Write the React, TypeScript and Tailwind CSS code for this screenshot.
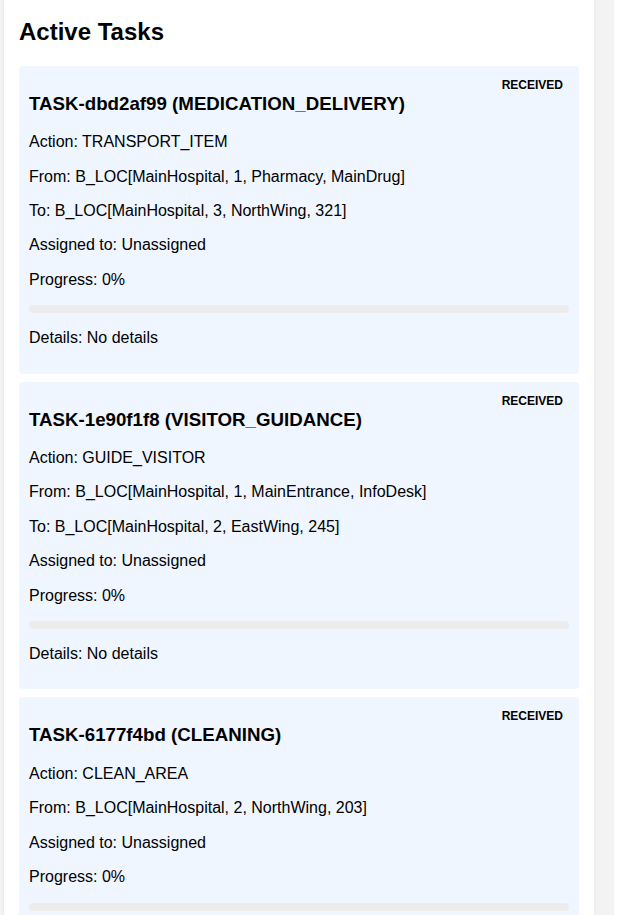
const tasks = [
  {
    id: 'TASK-dbd2af99',
    type: 'MEDICATION_DELIVERY',
    action: 'TRANSPORT_ITEM',
    from: 'B_LOC[MainHospital, 1, Pharmacy, MainDrug]',
    to: 'B_LOC[MainHospital, 3, NorthWing, 321]',
  },
  {
    id: 'TASK-1e90f1f8',
    type: 'VISITOR_GUIDANCE',
    action: 'GUIDE_VISITOR',
    from: 'B_LOC[MainHospital, 1, MainEntrance, InfoDesk]',
    to: 'B_LOC[MainHospital, 2, EastWing, 245]',
  },
  {
    id: 'TASK-6177f4bd',
    type: 'CLEANING',
    action: 'CLEAN_AREA',
    from: 'B_LOC[MainHospital, 2, NorthWing, 203]',
    to: null as string | null,
  },
];

function Line({ children }: { children: React.ReactNode }) {
  return <p className="my-4 text-base leading-[18.4px]">{children}</p>;
}

export default function App() {
  return (
    <div className="h-[915px] overflow-hidden bg-[#f3f3f3] flex gap-5 pl-1 font-['Liberation_Sans',Arial,sans-serif] text-black">
      {/* task list panel */}
      <div className="w-[590px] shrink-0 bg-white px-[15px] shadow-[0_0_3px_rgba(0,0,0,0.08)]">
        <h2 className="mt-[18px] mb-5 text-2xl font-bold leading-[27.6px]">Active Tasks</h2>
        {tasks.map(task => (
          <div key={task.id} className="mb-2 rounded bg-[#eff6ff] p-2.5 flow-root">
            <span className="float-right px-1.5 py-[2px] text-xs font-bold leading-[14px]">RECEIVED</span>
            <h3 className="mt-[17px] mb-[19px] text-[18.72px] font-bold leading-[21.5px]">
              {task.id} ({task.type})
            </h3>
            <Line>Action: {task.action}</Line>
            <Line>From: {task.from}</Line>
            {task.to && <Line>To: {task.to}</Line>}
            <Line>Assigned to: Unassigned</Line>
            <Line>Progress: 0%</Line>
            <div className="my-4 h-2 rounded bg-[#ececec]">
              <div className="h-full w-0 rounded bg-blue-500" />
            </div>
            <Line>Details: No details</Line>
          </div>
        ))}
      </div>
      <div className="flex-1 bg-white" />
    </div>
  );
}
